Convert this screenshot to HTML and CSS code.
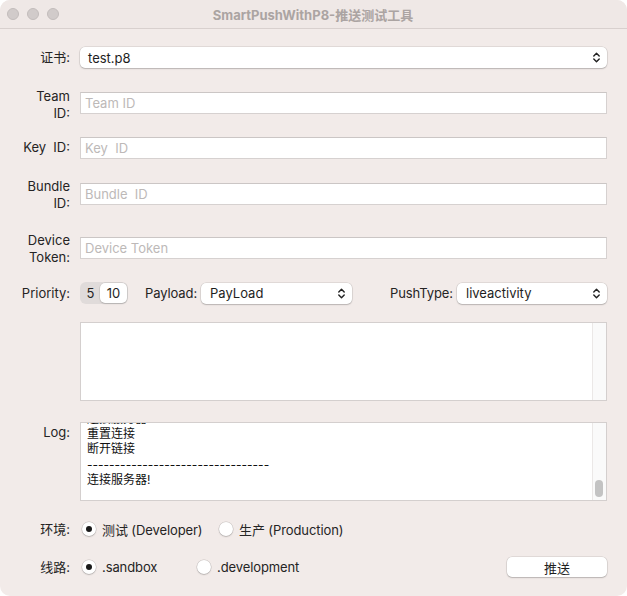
FILE: index.html
```html
<!DOCTYPE html>
<html lang="zh">
<head>
<meta charset="utf-8">
<title>SmartPushWithP8-推送测试工具</title>
<link rel="stylesheet" href="styles.css">
</head>
<body>
<div class="window">
  <div class="titlebar">
    <div class="lights"><span class="light"></span><span class="light"></span><span class="light"></span></div>
    <div class="title">SmartPushWithP8-推送测试工具</div>
  </div>
  <div class="form">
    <div class="row r-cert">
      <div class="lbl">证书:</div>
      <div class="select wide"><span>test.p8</span>
        <svg class="arrows" width="7" height="11" viewBox="0 0 7 11"><path d="M0.8 4 L3.5 1.2 L6.2 4 M0.8 7 L3.5 9.8 L6.2 7" fill="none" stroke="#222" stroke-width="1.4" stroke-linecap="round" stroke-linejoin="round"/></svg>
      </div>
    </div>
    <div class="row two r-team">
      <div class="lbl">Team<br>ID:</div>
      <div class="field"><span class="ph">Team ID</span></div>
    </div>
    <div class="row r-key">
      <div class="lbl">Key&nbsp;&nbsp;ID:</div>
      <div class="field"><span class="ph">Key&nbsp;&nbsp;ID</span></div>
    </div>
    <div class="row two r-bundle">
      <div class="lbl">Bundle<br>ID:</div>
      <div class="field"><span class="ph">Bundle&nbsp;&nbsp;ID</span></div>
    </div>
    <div class="row two r-device">
      <div class="lbl">Device<br>Token:</div>
      <div class="field"><span class="ph">Device Token</span></div>
    </div>
    <div class="row r-prio">
      <div class="lbl">Priority:</div>
      <div class="seg"><span class="seg-a">5</span><span class="seg-b">10</span></div>
      <div class="plabel">Payload:</div>
      <div class="select payload"><span>PayLoad</span>
        <svg class="arrows" width="7" height="11" viewBox="0 0 7 11"><path d="M0.8 4 L3.5 1.2 L6.2 4 M0.8 7 L3.5 9.8 L6.2 7" fill="none" stroke="#222" stroke-width="1.4" stroke-linecap="round" stroke-linejoin="round"/></svg>
      </div>
      <div class="plabel ptype">PushType:</div>
      <div class="select pushtype"><span>liveactivity</span>
        <svg class="arrows" width="7" height="11" viewBox="0 0 7 11"><path d="M0.8 4 L3.5 1.2 L6.2 4 M0.8 7 L3.5 9.8 L6.2 7" fill="none" stroke="#222" stroke-width="1.4" stroke-linecap="round" stroke-linejoin="round"/></svg>
      </div>
    </div>
    <div class="row r-payload">
      <div class="lbl"></div>
      <div class="textbox"><div class="content"></div><div class="track"></div></div>
    </div>
    <div class="row r-log">
      <div class="lbl log-lbl">Log:</div>
      <div class="textbox">
        <div class="content log">
          <div class="logtext">
            <div>连接服务器 · · · · &nbsp;.</div>
            <div>重置连接</div>
            <div>断开链接</div>
            <div>---------------------------------</div>
            <div>连接服务器!</div>
          </div>
        </div>
        <div class="track"><span class="thumb"></span></div>
      </div>
    </div>
    <div class="row r-env">
      <div class="lbl">环境:</div>
      <div class="opt env1"><span class="radio on"></span><span>测试 (Developer)</span></div>
      <div class="opt"><span class="radio"></span><span>生产 (Production)</span></div>
    </div>
    <div class="row r-route">
      <div class="lbl">线路:</div>
      <div class="opt route1"><span class="radio on"></span><span>.sandbox</span></div>
      <div class="opt"><span class="radio"></span><span>.development</span></div>
      <div class="spacer"></div>
      <div class="button">推送</div>
    </div>
  </div>
</div>
</body>
</html>
```
FILE: styles.css
```css
* { box-sizing: border-box; }
html, body { margin: 0; padding: 0; background: #ffffff; }
body {
  font-family: Inter, "Noto Sans CJK SC", sans-serif;
  font-size: 13px;
  color: #252424;
}
.window {
  width: 627px;
  height: 596px;
  background: #f2ebe9;
  border-radius: 10px;
  overflow: hidden;
}
.titlebar {
  height: 29px;
  border-bottom: 1px solid #d8d0ce;
  background: #efe8e6;
  display: flex;
  align-items: center;
  position: relative;
}
.lights { display: flex; gap: 8px; padding-left: 7px; }
.light {
  width: 12px; height: 12px; border-radius: 50%;
  background: #d1cbca;
  border: 1px solid #c2bcbb;
}
.title {
  flex: 1;
  text-align: center;
  font-weight: 700;
  color: #aba4a2;
  font-size: 13px;
  margin-right: 56px;
  margin-left: -4px;
}
.form { padding-right: 20px; }
.row { display: flex; align-items: center; }
.lbl {
  width: 70px;
  flex: none;
  text-align: right;
  margin-right: 10px;
  line-height: 17px;
}
.two { align-items: flex-start; }
.two .field { margin-top: 4px; }
.r-cert { margin-top: 18px; height: 21px; }
.r-team { margin-top: 20px; height: 34px; }
.r-key { margin-top: 15px; height: 21px; }
.r-bundle { margin-top: 20px; height: 34px; }
.r-bundle .field, .r-device .field { margin-top: 5px; }
.r-device { margin-top: 20px; height: 34px; }
.r-prio { margin-top: 16px; height: 22px; }
.r-payload { margin-top: 18px; height: 79px; }
.r-log { margin-top: 21px; height: 79px; align-items: flex-start; }
.r-env { margin-top: 18px; height: 20px; }
.r-route { margin-top: 18px; height: 20px; }

.select {
  height: 21px;
  background: #ffffff;
  border-radius: 5px;
  box-shadow: 0 0 0 0.5px rgba(0,0,0,0.14), 0 1px 1.5px rgba(0,0,0,0.18);
  display: flex;
  align-items: center;
  justify-content: space-between;
  padding: 0 7px 0 8px;
  color: #1e1e1e;
}
.wide { flex: 1; }
.arrows { flex: none; }
.field {
  flex: 1;
  height: 22px;
  background: #ffffff;
  border: 1px solid #d6d1d0;
  border-top-color: #cbc6c5;
  display: flex;
  align-items: center;
  padding-left: 4px;
}
.ph { color: #bdb9b8; }

.seg {
  width: 48px;
  height: 22px;
  border-radius: 6px;
  background: #e0dbda;
  display: flex;
  align-items: center;
  padding: 1px;
}
.seg-a { width: 19px; text-align: center; }
.seg-b {
  flex: 1;
  height: 20px;
  background: #ffffff;
  border-radius: 5px;
  box-shadow: 0 0 0 0.5px rgba(0,0,0,0.1), 0 1px 1.5px rgba(0,0,0,0.15);
  display: flex; align-items: center; justify-content: center;
}
.plabel { margin-left: 17px; margin-right: 4px; letter-spacing: -0.1px; }
.ptype { margin-left: 38px; }
.payload { width: 151px; padding-left: 9px; }
.pushtype { flex: 1; padding-left: 9px; }

.textbox {
  flex: 1;
  height: 79px;
  border: 1px solid #d4cfce;
  background: #ffffff;
  display: flex;
  overflow: hidden;
}
.content { flex: 1; overflow: hidden; }
.track {
  width: 14px;
  flex: none;
  background: #fafafa;
  border-left: 1px solid #ebe8e7;
  position: relative;
}
.thumb {
  position: absolute;
  left: 2px;
  top: 57px;
  width: 8px;
  height: 17px;
  border-radius: 4px;
  background: #c3c3c3;
}
.log-lbl { padding-top: 2px; }
.logtext {
  margin-top: -12px;
  padding-left: 6px;
  font-size: 12px;
  line-height: 15.2px;
  color: #111;
}

.opt { display: flex; align-items: center; gap: 6px; padding-left: 2px; letter-spacing: -0.1px; }
.env1 { width: 137px; }
.route1 { width: 115px; }
.radio {
  width: 14px; height: 14px;
  border-radius: 50%;
  background: #ffffff;
  box-shadow: 0 0 0 0.5px rgba(0,0,0,0.18), 0 1px 1.5px rgba(0,0,0,0.16);
  display: flex; align-items: center; justify-content: center;
  flex: none;
}
.radio.on::after {
  content: "";
  width: 6px; height: 6px; border-radius: 50%;
  background: #1a1a1a;
}
.spacer { flex: 1; }
.button {
  width: 100px;
  height: 20px;
  background: #ffffff;
  border-radius: 5px;
  box-shadow: 0 0 0 0.5px rgba(0,0,0,0.14), 0 1px 1.5px rgba(0,0,0,0.18);
  display: flex; align-items: center; justify-content: center;
  color: #1e1e1e;
}
```
